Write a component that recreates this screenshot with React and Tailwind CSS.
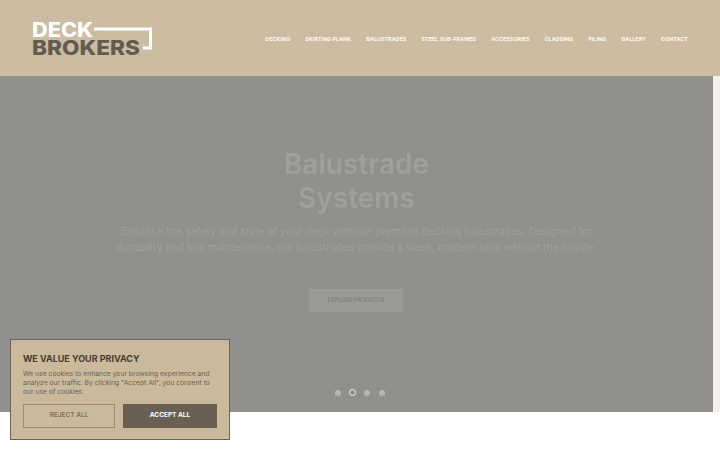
const nav = ["Decking","Skirting Plank","Balustrades","Steel Sub-Frames","Accessories","Cladding","Piling","Gallery","Contact"];

function Logo() {
  return (
    <svg width="124" height="40" viewBox="0 0 124 40" className="block overflow-visible">
      <text x="0" y="18.5" fill="#ffffff" fontFamily="Inter, sans-serif" fontWeight="800" fontSize="20" textLength="61" lengthAdjust="spacingAndGlyphs">DECK</text>
      <text x="0" y="37" fill="#625b4f" fontFamily="Inter, sans-serif" fontWeight="800" fontSize="20" textLength="108" lengthAdjust="spacingAndGlyphs">BROKERS</text>
      <path d="M62 11H118.5V30H111" fill="none" stroke="#ffffff" strokeWidth="3" />
    </svg>
  );
}

export default function App() {
  return (
    <div className="relative h-[450px] w-[720px] overflow-hidden bg-white font-['Inter',sans-serif]">
      <header className="flex h-[76px] items-center justify-between bg-[#cbbca2] pl-8 pr-8">
        <Logo />
        <nav className="mt-[3px] flex gap-[15px] text-[5.45px] font-bold uppercase text-[#fbf8f2]">
          {nav.map((n) => <span key={n}>{n}</span>)}
        </nav>
      </header>
      <div className="flex h-[336px]">
        <section className="relative flex w-[713px] flex-col items-center bg-[#91908c] pt-[71px]">
          <h1 className="text-center text-[28px] font-semibold leading-[34px] text-[#a09f9a] blur-[0.4px]">Balustrade<br />Systems</h1>
          <p className="mt-[9px] w-[490px] text-center text-[10.5px] leading-4 text-[#a09f9a] blur-[0.4px]">Enhance the safety and style of your deck with our premium decking balustrades. Designed for durability and low maintenance, our balustrades provide a sleek, modern look without the hassle.</p>
          <div className="mr-[1px] mt-[33px] flex h-[23px] w-[94px] items-center justify-center bg-[#9b9a95] text-[5.5px] font-bold uppercase text-[#868580] blur-[0.3px]">Explore Products</div>
          <div className="absolute left-[335px] top-[313px] flex items-center gap-[8.2px]">
            <span className="h-[6px] w-[6px] rounded-full bg-[#b6b5b0]" />
            <span className="h-[7px] w-[7px] rounded-full border-[1.5px] border-[#f1f0ec] bg-[#8f8e89]" />
            <span className="h-[6px] w-[6px] rounded-full bg-[#b6b5b0]" />
            <span className="h-[6px] w-[6px] rounded-full bg-[#b6b5b0]" />
          </div>
        </section>
        <div className="w-[7px] bg-[#f4f1ec]" />
      </div>
      <div className="absolute left-[10px] top-[339px] h-[101px] w-[220px] border border-[#6a6457] bg-[#cbb99c] px-3 pt-3">
        <h2 className="text-[9px] font-bold leading-[13px] text-[#453d32]">WE VALUE YOUR PRIVACY</h2>
        <p className="mt-1 text-[6.75px] leading-[9.2px] text-[#6f6455]">We use cookies to enhance your browsing experience and analyze our traffic. By clicking "Accept All", you consent to our use of cookies.</p>
        <div className="mt-[7px] flex gap-2">
          <div className="flex h-[24px] w-[92px] items-center justify-center border border-[#9b8c72] text-[6.5px] font-semibold text-[#7c705e]">REJECT ALL</div>
          <div className="flex h-[24px] w-[94px] items-center justify-center bg-[#695f52] text-[6.5px] font-bold text-white">ACCEPT ALL</div>
        </div>
      </div>
    </div>
  );
}
